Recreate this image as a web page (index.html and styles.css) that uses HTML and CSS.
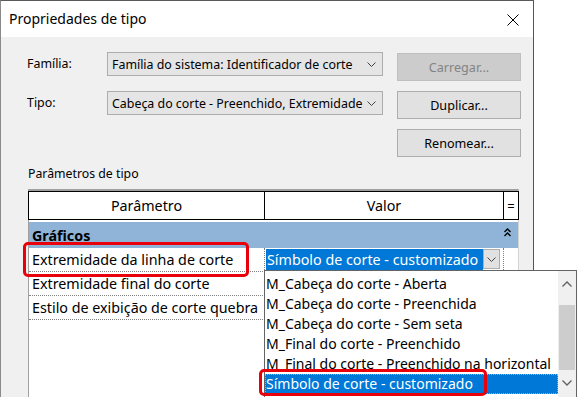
FILE: index.html
```html
<!DOCTYPE html>
<html lang="pt">
<head>
  <meta charset="UTF-8" />
  <title>Propriedades de tipo</title>
  <link rel="stylesheet" href="styles.css">
</head>
<body>

  <div class="dialog">
    <div class="titlebar">
      <span class="title">Propriedades de tipo</span>
      <svg class="close" width="12" height="12" viewBox="0 0 12 12">
        <path d="M0.5 0.5 L11.5 11.5 M11.5 0.5 L0.5 11.5" stroke="#000" stroke-width="1" fill="none" />
      </svg>
    </div>

    <div class="dialog-body">
      <div class="type-grid">
        <span class="label">Família:</span>
        <div class="combo">
          <span>Família do sistema: Identificador de corte</span>
          <svg class="chev" width="9" height="5" viewBox="0 0 9 5"><path d="M0.5 0.5 L4.5 4.5 L8.5 0.5" stroke="#444" fill="none" /></svg>
        </div>
        <button class="btn" disabled>Carregar...</button>

        <span class="label">Tipo:</span>
        <div class="combo">
          <span>Cabeça do corte - Preenchido, Extremidade</span>
          <svg class="chev" width="9" height="5" viewBox="0 0 9 5"><path d="M0.5 0.5 L4.5 4.5 L8.5 0.5" stroke="#444" fill="none" /></svg>
        </div>
        <button class="btn">Duplicar...</button>

        <button class="btn rename">Renomear...</button>
      </div>

      <div class="section-title">Parâmetros de tipo</div>

      <div class="props">
        <div class="props-head">
          <div class="head-cell">Parâmetro</div>
          <div class="head-cell">Valor</div>
          <div class="head-cell eq">=</div>
        </div>

        <div class="group">
          <span>Gráficos</span>
          <svg class="collapse" width="7" height="9" viewBox="0 0 7 9">
            <path d="M0.5 4 L3.5 1 L6.5 4 M0.5 8 L3.5 5 L6.5 8" stroke="#000" stroke-width="1.4" fill="none" />
          </svg>
        </div>

        <div class="prop-row">
          <div class="name">Extremidade da linha de corte</div>
          <div class="value">
            <span class="picked">Símbolo de corte - customizado</span>
            <span class="mini-drop">
              <svg width="9" height="5" viewBox="0 0 9 5"><path d="M0.5 0.5 L4.5 4.5 L8.5 0.5" stroke="#444" fill="none" /></svg>
            </span>
          </div>
          <div class="extra"></div>
        </div>
        <div class="prop-row">
          <div class="name">Extremidade final do corte</div>
          <div class="value"></div>
          <div class="extra"></div>
        </div>
        <div class="prop-row">
          <div class="name">Estilo de exibição de corte quebra</div>
          <div class="value"></div>
          <div class="extra"></div>
        </div>
        <div class="props-rest">
          <div class="name"></div>
          <div class="value"></div>
          <div class="extra"></div>
        </div>
      </div>
    </div>
  </div>

  <!-- open dropdown of the value cell -->
  <div class="dropdown">
    <ul class="options">
      <li>M_Cabeça do corte - Aberta</li>
      <li>M_Cabeça do corte - Preenchida</li>
      <li>M_Cabeça do corte - Sem seta</li>
      <li>M_Final do corte - Preenchido</li>
      <li>M_Final do corte - Preenchido na horizontal</li>
      <li class="active">Símbolo de corte - customizado</li>
    </ul>
    <div class="scrollbar">
      <svg class="arrow" width="10" height="6" viewBox="0 0 10 6"><path d="M0.5 5.5 L5 1 L9.5 5.5" stroke="#606060" stroke-width="1.3" fill="none" /></svg>
      <div class="thumb"></div>
      <svg class="arrow down" width="10" height="6" viewBox="0 0 10 6"><path d="M0.5 0.5 L5 5 L9.5 0.5" stroke="#606060" stroke-width="1.3" fill="none" /></svg>
    </div>
  </div>

  <!-- red marks -->
  <div class="mark mark-name"></div>
  <div class="mark mark-option"></div>

</body>
</html>
```

FILE: styles.css
```css
html, body {
  margin: 0;
  padding: 0;
  height: 100%;
  background: white;
  font-family: "Noto Sans", "Open Sans", sans-serif;
  color: black;
  overflow: hidden;
}
body {
  position: relative;
}
.dialog {
  width: 534px;
  height: 397px;
  box-sizing: border-box;
  border-top: 1px solid #5a5a5a;
  border-left: 1px solid #8a8a8a;
  border-right: 1px solid #555;
  background: #f0f0f0;
  display: flex;
  flex-direction: column;
}
.titlebar {
  height: 36px;
  background: white;
  display: flex;
  align-items: center;
  justify-content: space-between;
  padding: 0 14px 0 8px;
  flex-shrink: 0;
}
.title {
  font-size: 14px;
  margin-top: -1px;
}
.close {
  margin-top: 1px;
}
.dialog-body {
  flex: 1;
  display: flex;
  flex-direction: column;
  padding: 15px 0 0 26px;
  min-height: 0;
}
/* Família / Tipo block */
.type-grid {
  display: grid;
  grid-template-columns: 80px 276px 138px;
  grid-template-rows: 29px 28px 28px;
  row-gap: 10px;
  font-size: 12.4px;
}
.label {
  align-self: start;
  line-height: 24px;
}
.combo {
  align-self: start;
  height: 24px;
  box-sizing: border-box;
  border: 1px solid #adadad;
  background: #e5e5e5;
  display: flex;
  align-items: center;
  justify-content: space-between;
  padding: 0 6px 0 4px;
  white-space: nowrap;
}
.btn {
  justify-self: end;
  align-self: end;
  width: 124px;
  height: 28px;
  border: 1px solid #adadad;
  background: #e1e1e1;
  font-family: inherit;
  font-size: 12.6px;
  color: black;
  padding: 0;
}
.btn:disabled {
  background: #cccccc;
  border-color: #bfbfbf;
  color: #838383;
}
.rename {
  grid-column: 3;
}
.section-title {
  font-size: 12.3px;
  margin: 7px 0 5px 1px;
  line-height: 20px;
}
/* property grid */
.props {
  flex: 1;
  width: 491px;
  margin-left: 1px;
  box-sizing: border-box;
  border-top: 2px solid #a0a0a0;
  border-left: 1px solid #a0a0a0;
  border-right: 1px solid #d4d4d4;
  background: white;
  display: flex;
  flex-direction: column;
  font-size: 14.3px;
}
.props-head {
  display: grid;
  grid-template-columns: 237px 239px 15px;
  margin: 0 -1px;
  height: 29px;
}
.head-cell {
  border-top: 1px solid black;
  border-bottom: 1px solid black;
  border-right: 1px solid black;
  display: flex;
  align-items: center;
  justify-content: center;
}
.head-cell:first-child {
  border-left: 1px solid black;
}
.head-cell.eq {
  font-size: 13px;
}
.group {
  margin-top: 2px;
  height: 26px;
  background: #8fb4d7;
  display: flex;
  align-items: center;
  justify-content: space-between;
  padding: 0 7px 0 3px;
  font-weight: bold;
}
.collapse {
  margin-top: -6px;
}
.prop-row,
.props-rest {
  display: grid;
  grid-template-columns: 236px 239px 14px;
  height: 24px;
}
.props-rest {
  flex: 1;
  height: auto;
}
.prop-row .name {
  border-bottom: 1px dotted #808080;
  padding-left: 3px;
  line-height: 23px;
  white-space: nowrap;
}
.name,
.value {
  border-right: 1px dotted #808080;
}
.value {
  display: flex;
  align-items: flex-start;
  padding-top: 1px;
}
.picked {
  margin-left: 1px;
  width: 217px;
  height: 21px;
  line-height: 21px;
  background: #0078d7;
  color: white;
  white-space: nowrap;
  overflow: hidden;
  padding-left: 1px;
  box-sizing: border-box;
}
.mini-drop {
  width: 17px;
  height: 20px;
  box-sizing: border-box;
  border: 1px solid #adadad;
  background: #e1e1e1;
  display: flex;
  align-items: center;
  justify-content: center;
}
/* open list */
.dropdown {
  position: absolute;
  left: 264px;
  top: 270px;
  width: 313px;
  height: 140px;
  box-sizing: border-box;
  border: 1px solid #646464;
  background: white;
  display: flex;
  font-size: 14px;
}
.options {
  list-style: none;
  margin: 0;
  padding: 3px 0 0 0;
  flex: 1;
}
.options li {
  height: 20px;
  line-height: 20px;
  padding-left: 1px;
  white-space: nowrap;
}
.options li.active {
  background: #0078d7;
  color: white;
  outline: 1px dotted #e9a23b;
  outline-offset: -1px;
}
.scrollbar {
  width: 18px;
  background: #f0f0f0;
  display: flex;
  flex-direction: column;
  align-items: center;
}
.arrow {
  margin-top: 10px;
}
.thumb {
  width: 16px;
  height: 65px;
  margin-top: 18px;
  background: #cdcdcd;
}
.arrow.down {
  margin-top: 10px;
}
/* red highlight boxes */
.mark {
  position: absolute;
  border: 3px solid #e8000b;
  border-radius: 5px;
  box-sizing: border-box;
}
.mark-name {
  left: 23px;
  top: 242px;
  width: 226px;
  height: 35px;
}
.mark-option {
  left: 259px;
  top: 369px;
  width: 228px;
  height: 27px;
}
```
